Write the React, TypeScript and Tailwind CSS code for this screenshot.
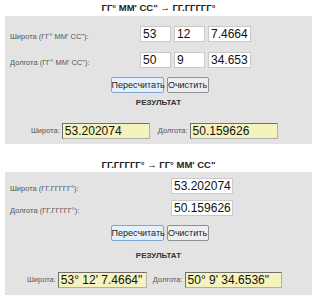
const font = "font-['Liberation_Sans','Arial',sans-serif]";

function Btn({ label, w, active }: { label: string; w: string; active?: boolean }) {
  return (
    <button
      className={`${w} h-[16px] text-[9px] leading-none text-[#222] border rounded-[2px] ${
        active ? "bg-[#e3f0fd] border-[#7ea6cf]" : "bg-[#eeeeee] border-[#8f8f8f]"
      }`}
    >
      {label}
    </button>
  );
}

function Field({ value, w }: { value: string; w: string }) {
  return (
    <div
      className={`${w} h-[16px] bg-white border border-[#c9c9c9] pl-[2px] text-[12px] leading-[14px] text-[#111]`}
    >
      {value}
    </div>
  );
}

function Result({ value, w }: { value: string; w: string }) {
  return (
    <div
      className={`${w} h-[16px] bg-[#f5f3bd] border border-[#b0b0b0] border-t-[#707070] border-l-[#707070] pl-[2px] text-[12px] leading-[14px] text-[#111]`}
    >
      {value}
    </div>
  );
}

function Label({ text }: { text: string }) {
  return <span className="text-[7.5px] text-[#555] whitespace-nowrap">{text}</span>;
}

function Title({ text }: { text: string }) {
  return (
    <div className="h-[14px] pt-[2px] text-center text-[9.5px] font-bold leading-[12px] text-[#222]">
      {text}
    </div>
  );
}

export default function App() {
  return (
    <div className={`w-[317px] h-[297px] bg-white ${font}`}>
      <Title text={"ГГ° ММ' СС\" → ГГ.ГГГГГ°"} />
      <div className="mx-[5px] mt-[2px] bg-[#e3e3e3] pt-[10px] pb-[5px]">
        <div className="flex items-center h-[16px]">
          <div className="w-[135px] pl-[5px]">
            <Label text={"Широта (ГГ° ММ' СС\"):"} />
          </div>
          <div className="flex gap-[3px]">
            <Field value="53" w="w-[31px]" />
            <Field value="12" w="w-[31px]" />
            <Field value="7.4664" w="w-[43px]" />
          </div>
        </div>
        <div className="flex items-center h-[16px] mt-[10px]">
          <div className="w-[135px] pl-[5px]">
            <Label text={"Долгота (ГГ° ММ' СС\"):"} />
          </div>
          <div className="flex gap-[3px]">
            <Field value="50" w="w-[31px]" />
            <Field value="9" w="w-[31px]" />
            <Field value="34.653" w="w-[43px]" />
          </div>
        </div>
        <div className="flex justify-center gap-[3px] mt-[9px] pl-[2px]">
          <Btn label="Пересчитать" w="w-[53px]" active />
          <Btn label="Очистить" w="w-[42px]" />
        </div>
        <div className="mt-[5px] text-center text-[8px] font-bold leading-[10px] text-[#333]">
          РЕЗУЛЬТАТ
        </div>
        <div className="flex items-center gap-[2px] mt-[15px] pl-[26px]">
          <Label text="Широта:" />
          <Result value="53.202074" w="w-[88px]" />
          <span className="w-[4px]" />
          <Label text="Долгота:" />
          <Result value="50.159626" w="w-[88px]" />
        </div>
      </div>

      <div className="h-[13px]" />
      <Title text={"ГГ.ГГГГГ° → ГГ° ММ' СС\""} />
      <div className="mx-[5px] mt-[1px] bg-[#e3e3e3] pt-[6px] pb-[7px]">
        <div className="flex items-center h-[16px]">
          <div className="w-[166px] pl-[5px]">
            <Label text={"Широта (ГГ.ГГГГГ°):"} />
          </div>
          <Field value="53.202074" w="w-[62px]" />
        </div>
        <div className="flex items-center h-[16px] mt-[6px]">
          <div className="w-[166px] pl-[5px]">
            <Label text={"Долгота (ГГ.ГГГГГ°):"} />
          </div>
          <Field value="50.159626" w="w-[62px]" />
        </div>
        <div className="flex justify-center gap-[3px] mt-[9px] pl-[2px]">
          <Btn label="Пересчитать" w="w-[53px]" active />
          <Btn label="Очистить" w="w-[42px]" />
        </div>
        <div className="mt-[10px] text-center text-[8px] font-bold leading-[10px] text-[#333]">
          РЕЗУЛЬТАТ
        </div>
        <div className="flex items-center gap-[2px] mt-[11px] pl-[22px]">
          <Label text="Широта:" />
          <Result value={"53° 12' 7.4664\""} w="w-[89px]" />
          <span className="w-[2px]" />
          <Label text="Долгота:" />
          <Result value={"50° 9' 34.6536\""} w="w-[97px]" />
        </div>
      </div>
    </div>
  );
}
